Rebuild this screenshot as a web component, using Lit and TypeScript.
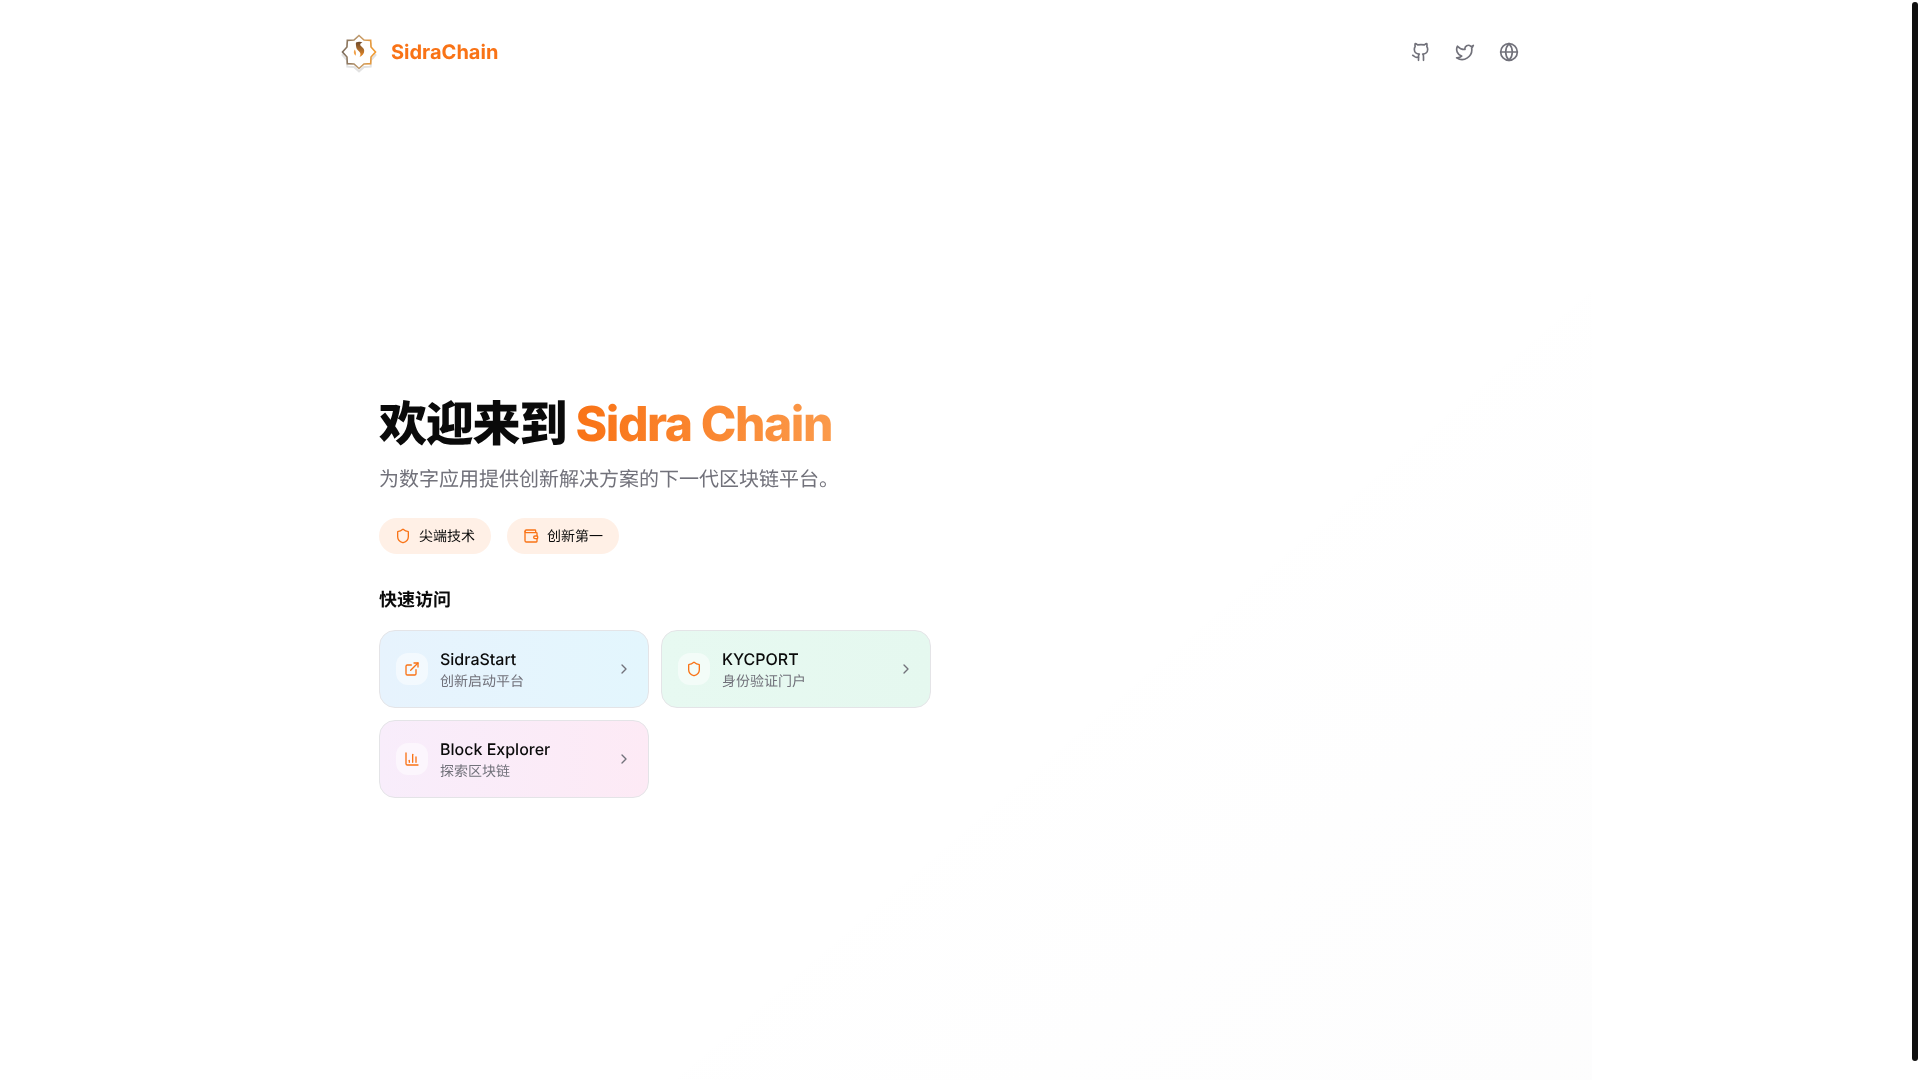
import { LitElement, html, css, svg } from "lit";
import { customElement } from "lit/decorators.js";

const icon = (size: number, parts: unknown) => html`<svg class="ic" width=${size} height=${size} viewBox="0 0 24 24" fill="none" stroke="currentColor" stroke-width="2" stroke-linecap="round" stroke-linejoin="round">${parts}</svg>`;

const shield = svg`<path d="M20 13c0 5-3.5 7.5-7.66 8.95a1 1 0 0 1-.67-.01C7.5 20.5 4 18 4 13V6a1 1 0 0 1 1-1c2 0 4.5-1.2 6.24-2.72a1.17 1.17 0 0 1 1.52 0C14.51 3.81 17 5 19 5a1 1 0 0 1 1 1z"/>`;
const wallet = svg`<path d="M19 7V4a1 1 0 0 0-1-1H5a2 2 0 0 0 0 4h15a1 1 0 0 1 1 1v4h-3a2 2 0 0 0 0 4h3a1 1 0 0 0 1-1v-2a1 1 0 0 0-1-1"/><path d="M3 5v14a2 2 0 0 0 2 2h15a1 1 0 0 0 1-1v-4"/>`;
const ext = svg`<path d="M15 3h6v6"/><path d="M10 14 21 3"/><path d="M18 13v6a2 2 0 0 1-2 2H5a2 2 0 0 1-2-2V8a2 2 0 0 1 2-2h6"/>`;
const chart = svg`<path d="M3 3v16a2 2 0 0 0 2 2h16"/><path d="M18 17V9"/><path d="M13 17V5"/><path d="M8 17v-3"/>`;
const chevron = svg`<path d="m9 18 6-6-6-6"/>`;
const github = svg`<path d="M15 22v-4a4.8 4.8 0 0 0-1-3.5c3 0 6-2 6-5.5.08-1.25-.27-2.48-1-3.5.28-1.15.28-2.35 0-3.5 0 0-1 0-3 1.5-2.64-.5-5.36-.5-8 0C6 2 5 2 5 2c-.3 1.15-.3 2.35 0 3.5A5.403 5.403 0 0 0 4 9c0 3.5 3 5.5 6 5.5-.39.49-.68 1.05-.85 1.65-.17.6-.22 1.23-.15 1.85v4"/><path d="M9 18c-4.51 2-5-2-7-2"/>`;
const twitter = svg`<path d="M22 4s-.7 2.1-2 3.4c1.6 10-9.4 17.3-18 11.6 2.2.1 4.4-.6 6-2C3 15.5.5 9.6 3 5c2.2 2.6 5.6 4.1 9 4-.9-4.2 4-6.6 7-3.8 1.1 0 3-1.2 3-1.2z"/>`;
const globe = svg`<circle cx="12" cy="12" r="10"/><path d="M12 2a14.5 14.5 0 0 0 0 20 14.5 14.5 0 0 0 0-20"/><path d="M2 12h20"/>`;

const star = (cx: number, cy: number, R: number, r: number) => {
  const pts: string[] = [];
  for (let k = 0; k < 16; k++) {
    const a = (k * Math.PI) / 8;
    const d = k % 2 === 0 ? R : r;
    pts.push(`${(cx + d * Math.sin(a)).toFixed(2)},${(cy - d * Math.cos(a)).toFixed(2)}`);
  }
  return pts.join(" ");
};

const logo = html`<svg class="logo" width="40" height="44" viewBox="0 0 40 44" fill="none">
  <defs>
    <linearGradient id="lg" x1="0" y1="0" x2="1" y2="0">
      <stop offset="0" stop-color="#7a6a5a"/><stop offset=".5" stop-color="#c09a6c"/><stop offset="1" stop-color="#f59a2c"/>
    </linearGradient>
    <linearGradient id="lg2" x1="0" y1="0" x2="0" y2="1">
      <stop offset="0" stop-color="#6f4a2c"/><stop offset=".55" stop-color="#b06e2c"/><stop offset="1" stop-color="#ef8a1e"/>
    </linearGradient>
  </defs>
  <polygon points=${star(19, 25, 16.5, 13)} fill="none" stroke="#e2e2e2" stroke-width="2"/>
  <polygon points=${star(19, 22, 16.5, 13)} fill="#fff" stroke="url(#lg)" stroke-width="1.6"/>
  <path d="M16 12.500c2.500-1.200 5-1 6.500.2-1.600.3-2.600 1.200-2.200 2.400.7 1.800 3.700 2.700 3.900 5.600.2 2.900-2 5.200-4.700 6.300 1-1.400 1.200-2.900.6-4.200-.9-1.900-3.600-2.900-3.900-5.600-.1-1.700-.6-3.300-.2-4.700z" fill="url(#lg2)"/>
  <path d="M14.800 19.500c-1.500 1.900-1.300 4.600.8 6.200.7-2.100.4-4.400-.8-6.200z" fill="#f2a24a"/>
</svg>`;

@customElement("app-root")
export class AppRoot extends LitElement {
  static styles = css`
    :host {
      display: block;
      position: relative;
      height: 100vh;
      overflow: hidden;
      background: #fff;
      color: #0a0a0a;
      font-family: Inter, "Noto Sans CJK SC", sans-serif;
      text-rendering: geometricPrecision;
    }
    * { box-sizing: border-box; }
    .ic { display: block; flex: none; }
    .glow {
      position: absolute;
      left: 640px;
      top: 260px;
      width: 952px;
      height: 820px;
      background: linear-gradient(to bottom right, rgba(255, 255, 255, 0) 45%, rgba(120, 120, 140, 0.014) 100%);
      pointer-events: none;
    }
    .page {
      position: relative;
      width: 1180px;
      margin-left: 340px;
      display: flex;
      flex-direction: column;
      will-change: transform;
    }
    header {
      height: 104px;
      display: flex;
      align-items: center;
      justify-content: space-between;
      padding-right: 1px;
    }
    .brand { display: flex; align-items: center; gap: 11px; }
    .logo { display: block; }
    .name {
      font-size: 20px;
      line-height: 28px;
      font-weight: 700;
      color: #f97316;
    }
    .social { display: flex; gap: 24px; color: #71717a; }
    main {
      padding: 296px 0 0 39px;
      width: 591px;
    }
    h1 {
      margin: 0;
      font-size: 48px;
      line-height: 48px;
      font-weight: 800;
      letter-spacing: -0.025em;
      white-space: nowrap;
    }
    .grad {
      letter-spacing: -0.03em;
      background: linear-gradient(90deg, #f97316, #fb9a4b);
      -webkit-background-clip: text;
      background-clip: text;
      color: transparent;
    }
    .sub {
      margin: 17px 0 0;
      font-size: 20px;
      line-height: 28px;
      color: #71717a;
      white-space: nowrap;
    }
    .pills { display: flex; gap: 16px; margin-top: 25px; }
    .pill {
      height: 36px;
      padding: 0 16px;
      display: flex;
      align-items: center;
      gap: 8px;
      border-radius: 18px;
      background: #fff0e6;
      font-size: 14px;
      line-height: 20px;
      color: #0a0a0a;
    }
    .pill .ic { color: #f97316; }
    .pill span { padding-top: 1px; }
    h2 {
      margin: 33px 0 0;
      font-size: 18px;
      line-height: 28px;
      font-weight: 600;
    }
    .grid {
      display: grid;
      grid-template-columns: 270px 270px;
      gap: 12px;
      margin-top: 15px;
    }
    .card {
      height: 78px;
      padding: 0 16px;
      display: flex;
      align-items: center;
      gap: 12px;
      border: 1px solid #e4e4e7;
      border-radius: 16px;
    }
    .blue { background: linear-gradient(90deg, #e7f3fd, #e3f6fd); }
    .green { background: linear-gradient(90deg, #e7f9f1, #e5f8ef); }
    .pink { background: linear-gradient(90deg, #f8edfb, #fdeaf5); }
    .badge {
      width: 32px;
      height: 32px;
      flex: none;
      display: flex;
      align-items: center;
      justify-content: center;
      border-radius: 12px;
      background: rgba(255, 255, 255, 0.5);
      color: #f97316;
    }
    .txt { flex: 1; min-width: 0; }
    .t { font-size: 16px; line-height: 24px; font-weight: 500; color: #0a0a0a; }
    .d { font-size: 14px; line-height: 20px; color: #71717a; padding-top: 1px; }
    .chev { color: #71717a; }
    .thumb {
      position: absolute;
      right: 2px;
      top: 2px;
      width: 6px;
      height: 1059px;
      border-radius: 3px;
      background: #0f0f0f;
    }
  `;

  render() {
    const card = (cls: string, ic: unknown, t: string, d: string) => html`
      <div class="card ${cls}">
        <div class="badge">${icon(16, ic)}</div>
        <div class="txt"><div class="t">${t}</div><div class="d">${d}</div></div>
        <div class="chev">${icon(16, chevron)}</div>
      </div>`;
    return html`
      <div class="glow"></div>
      <div class="page">
        <header>
          <div class="brand">${logo}<span class="name">SidraChain</span></div>
          <div class="social">${icon(20, github)}${icon(20, twitter)}${icon(20, globe)}</div>
        </header>
        <main>
          <h1>欢迎来到 <span class="grad">Sidra Chain</span></h1>
          <p class="sub">为数字应用提供创新解决方案的下一代区块链平台。</p>
          <div class="pills">
            <div class="pill">${icon(16, shield)}<span>尖端技术</span></div>
            <div class="pill">${icon(16, wallet)}<span>创新第一</span></div>
          </div>
          <h2>快速访问</h2>
          <div class="grid">
            ${card("blue", ext, "SidraStart", "创新启动平台")}
            ${card("green", shield, "KYCPORT", "身份验证门户")}
            ${card("pink", chart, "Block Explorer", "探索区块链")}
          </div>
        </main>
      </div>
      <div class="thumb"></div>
    `;
  }
}
